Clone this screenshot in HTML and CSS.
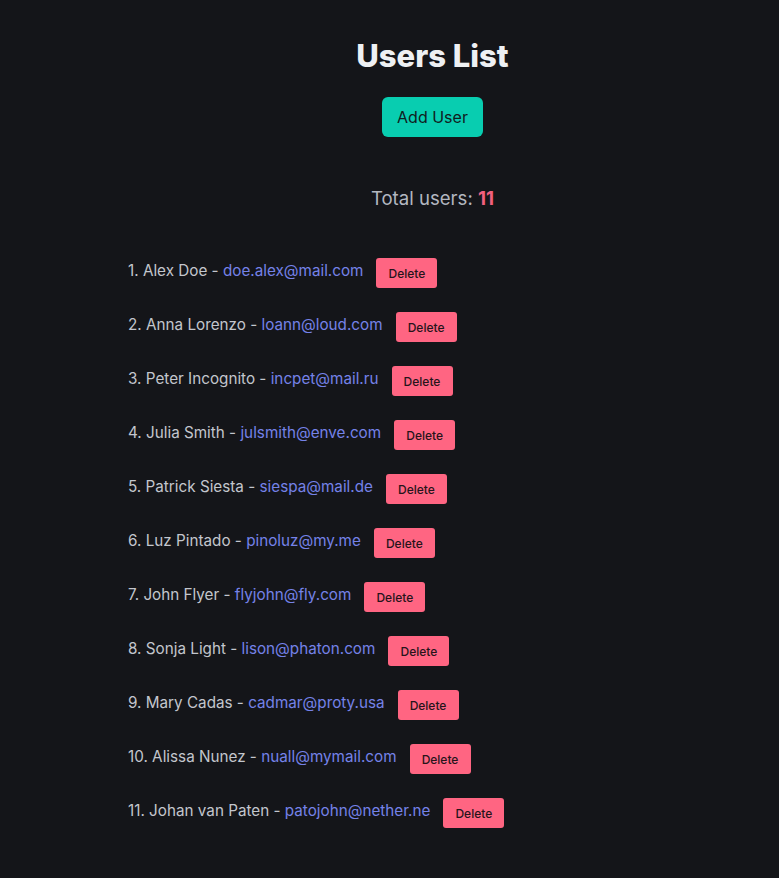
FILE: index.html
```html
<!DOCTYPE html>
<html lang="en">
<head>
<meta charset="utf-8">
<title>Users List</title>
<link rel="stylesheet" href="styles.css">
</head>
<body>
<main class="container">
  <h1 class="title">Users List</h1>
  <div class="actions"><button class="btn-add">Add User</button></div>
  <p class="total">Total users: <strong>11</strong></p>
  <ul class="users">
    <li><span>1. Alex Doe - <a href="#">doe.alex@mail.com</a></span><button class="btn-del">Delete</button></li>
    <li><span>2. Anna Lorenzo - <a href="#">loann@loud.com</a></span><button class="btn-del">Delete</button></li>
    <li><span>3. Peter Incognito - <a href="#">incpet@mail.ru</a></span><button class="btn-del">Delete</button></li>
    <li><span>4. Julia Smith - <a href="#">julsmith@enve.com</a></span><button class="btn-del">Delete</button></li>
    <li><span>5. Patrick Siesta - <a href="#">siespa@mail.de</a></span><button class="btn-del">Delete</button></li>
    <li><span>6. Luz Pintado - <a href="#">pinoluz@my.me</a></span><button class="btn-del">Delete</button></li>
    <li><span>7. John Flyer - <a href="#">flyjohn@fly.com</a></span><button class="btn-del">Delete</button></li>
    <li><span>8. Sonja Light - <a href="#">lison@phaton.com</a></span><button class="btn-del">Delete</button></li>
    <li><span>9. Mary Cadas - <a href="#">cadmar@proty.usa</a></span><button class="btn-del">Delete</button></li>
    <li><span>10. Alissa Nunez - <a href="#">nuall@mymail.com</a></span><button class="btn-del">Delete</button></li>
    <li><span>11. Johan van Paten - <a href="#">patojohn@nether.ne</a></span><button class="btn-del">Delete</button></li>
  </ul>
</main>
</body>
</html>
```
FILE: styles.css
```css
html, body {
  margin: 0;
  padding: 0;
  background: #141519;
}
body {
  font-family: Inter, "Noto Sans", sans-serif;
  color: #c3c6cd;
  min-height: 878px;
}
.container {
  margin-left: 128px;
  width: 609px;
  padding-top: 36px;
}
.title {
  margin: 0;
  text-align: center;
  font-size: 31px;
  line-height: 40px;
  font-weight: 800;
  color: #eef0f3;
}
.actions {
  display: flex;
  justify-content: center;
  margin-top: 21px;
}
.btn-add {
  font-family: inherit;
  font-size: 16px;
  height: 40px;
  width: 101px;
  border: none;
  border-radius: 6px;
  background: #08cdb0;
  color: #10201e;
  cursor: pointer;
}
.total {
  margin: 43px 0 0;
  text-align: center;
  font-size: 18.6px;
  line-height: 36px;
  color: #b3b7c0;
}
.total strong {
  color: #f0607e;
  font-weight: 700;
}
.users {
  list-style: none;
  margin: 42px 0 0;
  padding: 0;
  display: flex;
  flex-direction: column;
  gap: 24px;
}
.users li {
  display: flex;
  align-items: center;
  gap: 13px;
  height: 30px;
  font-size: 15.25px;
}
.users li span {
  position: relative;
  top: -3px;
}
.users a {
  color: #7582e8;
  text-decoration: none;
}
.btn-del {
  font-family: inherit;
  font-size: 12px;
  font-weight: 500;
  height: 30px;
  width: 61px;
  border: none;
  border-radius: 3px;
  background: #ff6582;
  color: #26141a;
  cursor: pointer;
  padding: 0;
}
```
